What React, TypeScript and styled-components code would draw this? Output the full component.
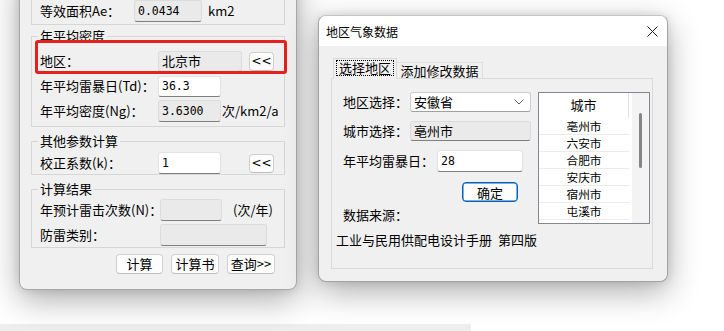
import React from "react";
import styled, { createGlobalStyle } from "styled-components";

const GlobalStyle = createGlobalStyle`
  html, body { margin: 0; padding: 0; background: #ffffff; }
  body {
    width: 724px; height: 331px; overflow: hidden;
    font-family: "Noto Sans CJK SC", "Noto Sans", sans-serif;
    font-size: 13px; color: #000;
  }
  * { box-sizing: border-box; }
`;

const Desktop = styled.div`
  position: relative;
  width: 724px;
  height: 331px;
  overflow: hidden;
  background: #ffffff;
`;

const BackStrip = styled.div`
  position: absolute;
  left: 0;
  top: 324px;
  width: 471px;
  height: 7px;
  background: #eeeeee;
`;

/* ---------- main (left) window ---------- */

const MainWindow = styled.div`
  position: absolute;
  left: 19px;
  top: -30px;
  width: 278px;
  height: 320px;
  background: #f0f0f0;
  border: 1px solid #a8a8a8;
  border-radius: 0 0 8px 8px;
  box-shadow: 0 10px 32px rgba(0, 0, 0, 0.32), 0 0 10px rgba(0, 0, 0, 0.12);
  padding: 10px 11px 0 11px;
  display: flex;
  flex-direction: column;
`;

const Highlight = styled.div`
  position: absolute;
  left: 15px;
  top: 69px;
  width: 252px;
  height: 34px;
  border: 3px solid #e4211d;
  border-radius: 3px;
  pointer-events: none;
`;

const Group = styled.fieldset<{ $mt: number; $pt: number; $pb: number }>`
  margin: ${(p) => p.$mt}px 0 0 0;
  padding: ${(p) => p.$pt}px 8px ${(p) => p.$pb}px 8px;
  border: 1px solid #d6d6d6;
  min-width: 0;
`;

const Legend = styled.legend`
  padding: 0 2px;
  margin-left: -2px;
  line-height: 16px;
  font-size: 13px;
`;

const Rows = styled.div`
  display: flex;
  flex-direction: column;
  gap: 3px;
`;

const Row = styled.div`
  display: flex;
  align-items: center;
  height: 22px;
  white-space: nowrap;
`;

const Label = styled.span<{ $w: number }>`
  flex: 0 0 ${(p) => p.$w}px;
  width: ${(p) => p.$w}px;
  line-height: 16px;
  white-space: nowrap;
`;

const Field = styled.div<{ $w: number; $h?: number; $ro?: boolean; $mono?: boolean }>`
  flex: 0 0 ${(p) => p.$w}px;
  width: ${(p) => p.$w}px;
  height: ${(p) => p.$h ?? 21}px;
  background: ${(p) => (p.$ro ? "#eaeaea" : "#ffffff")};
  border: 1px solid ${(p) => (p.$ro ? "#dcdcdc" : "#e2e2e2")};
  border-bottom-color: #7f7f7f;
  border-radius: 3px;
  padding: 0 3px;
  display: flex;
  align-items: center;
  font-family: ${(p) =>
    p.$mono
      ? `"DejaVu Sans Mono", "Noto Sans CJK SC", monospace`
      : `"Noto Sans CJK SC", sans-serif`};
  font-size: ${(p) => (p.$mono ? "11.5px" : "13px")};
  line-height: 16px;
`;

const Unit = styled.span<{ $ml: number }>`
  margin-left: ${(p) => p.$ml}px;
  line-height: 16px;
`;

const SmallButton = styled.button<{ $ml: number }>`
  margin-left: ${(p) => p.$ml}px;
  width: 25px;
  height: 19px;
  padding: 0;
  background: #fdfdfd;
  border: 1px solid #cfcfcf;
  border-bottom-color: #bdbdbd;
  border-radius: 4px;
  font-family: "DejaVu Sans", sans-serif;
  font-size: 12px;
  line-height: 17px;
  color: #000;
`;

const ButtonBar = styled.div`
  display: flex;
  justify-content: flex-end;
  gap: 8px;
  margin: 6px 10px 0 0;
`;

const PushButton = styled.button<{ $w: number }>`
  width: ${(p) => p.$w}px;
  height: 20px;
  padding: 0;
  background: #fdfdfd;
  border: 1px solid #d0d0d0;
  border-bottom-color: #bcbcbc;
  border-radius: 4px;
  font-family: "Noto Sans CJK SC", sans-serif;
  font-size: 13px;
  line-height: 18px;
  color: #000;
`;

/* ---------- dialog ---------- */

const Dialog = styled.div`
  position: absolute;
  left: 318px;
  top: 15px;
  width: 350px;
  height: 267px;
  border: 1px solid #a3a3a3;
  border-top-color: #c4c4c4;
  border-radius: 8px;
  overflow: hidden;
  background: #f0f0f0;
  box-shadow: 0 10px 32px rgba(0, 0, 0, 0.32), 0 0 10px rgba(0, 0, 0, 0.12);
  display: flex;
  flex-direction: column;
`;

const TitleBar = styled.div`
  height: 30px;
  flex: 0 0 30px;
  background: #ffffff;
  display: flex;
  align-items: center;
  justify-content: space-between;
  padding: 0 9px 0 7px;
`;

const TitleText = styled.span`
  font-size: 12px;
  line-height: 16px;
  margin-top: 1px;
`;

const DialogBody = styled.div`
  flex: 1;
  display: flex;
  flex-direction: column;
  padding: 12px 14px 12px 12px;
`;

const TabStrip = styled.div`
  display: flex;
  align-items: flex-end;
  height: 20px;
  padding-left: 2px;
`;

const ActiveTab = styled.div`
  position: relative;
  z-index: 1;
  width: 64px;
  height: 21px;
  margin-bottom: -1px;
  background: #f0f0f0;
  border: 1px solid #d9d9d9;
  border-bottom: none;
  padding: 1px 2px 0 2px;
`;

const FocusText = styled.div`
  height: 16px;
  border: 1px dotted #000;
  display: flex;
  align-items: center;
  justify-content: center;
  line-height: 14px;
`;

const Tab = styled.div`
  width: 86px;
  height: 16px;
  border: 1px solid #e0e0e0;
  border-left: none;
  border-bottom: none;
  display: flex;
  align-items: center;
  justify-content: center;
  line-height: 14px;
`;

const Panel = styled.div`
  height: 191px;
  border: 1px solid #dadada;
  display: flex;
  flex-direction: column;
  padding: 13px 2px 0 4px;
`;

const TopSection = styled.div`
  display: flex;
  align-items: flex-start;
  height: 132px;
`;

const FormCol = styled.div`
  margin-left: 7px;
  width: 188px;
  display: flex;
  flex-direction: column;
`;

const DlgRow = styled.div<{ $h: number; $mt?: number }>`
  display: flex;
  align-items: center;
  height: ${(p) => p.$h}px;
  margin-top: ${(p) => p.$mt ?? 0}px;
  white-space: nowrap;
`;

const SelectBox = styled.div`
  width: 121px;
  height: 20px;
  background: #fff;
  border: 1px solid #cccccc;
  border-bottom-color: #a0a0a0;
  border-radius: 3px;
  display: flex;
  align-items: center;
  justify-content: space-between;
  padding: 0 6px 0 3px;
  line-height: 16px;
`;

const OkButton = styled.button`
  margin-left: 119px;
  width: 56px;
  height: 20px;
  padding: 0;
  background: #fdfdfd;
  border: 1px solid #0063b8;
  box-shadow: inset 0 0 0 0.5px #0063b8;
  border-radius: 4px;
  font-family: "Noto Sans CJK SC", sans-serif;
  font-size: 13px;
  line-height: 17px;
  color: #000;
`;

const PlainText = styled.div<{ $mt?: number; $ml?: number }>`
  margin-top: ${(p) => p.$mt ?? 0}px;
  margin-left: ${(p) => p.$ml ?? 0}px;
  line-height: 16px;
  white-space: nowrap;
  word-spacing: 3px;
`;

const ListBox = styled.div`
  margin-left: 7px;
  width: 112px;
  height: 132px;
  border: 1px solid #828790;
  background: #fff;
  display: flex;
  overflow: hidden;
`;

const ListCol = styled.div`
  width: 90px;
  flex: 0 0 90px;
  display: flex;
  flex-direction: column;
`;

const ListHeader = styled.div`
  height: 25px;
  flex: 0 0 25px;
  border-right: 1px solid #e3e3e3;
  text-align: center;
  line-height: 23px;
`;

const ListRow = styled.div`
  height: 17px;
  flex: 0 0 17px;
  border-bottom: 1px solid #ebebeb;
  text-align: center;
  font-size: 11.7px;
  line-height: 16px;
`;

const ScrollTrack = styled.div`
  margin-left: 3px;
  width: 17px;
  flex: 0 0 17px;
  background: #f3f3f3;
`;

const ScrollThumb = styled.div`
  margin: 20px 0 0 7px;
  width: 3px;
  height: 55px;
  border-radius: 2px;
  background: #858585;
`;

const cities = ["亳州市", "六安市", "合肥市", "安庆市", "宿州市", "屯溪市", "淮北市"];

export default function App() {
  return (
    <>
      <GlobalStyle />
      <Desktop>
        <BackStrip />

        <MainWindow>
          <Group $mt={0} $pt={18} $pb={2}>
            <Row>
              <Label $w={94}>等效面积Ae：</Label>
              <Field $w={68} $h={22} $ro $mono>0.0434</Field>
              <Unit $ml={6}>km2</Unit>
            </Row>
          </Group>

          <Group $mt={3} $pt={6} $pb={4}>
            <Legend>年平均密度</Legend>
            <Rows>
              <Row>
                <Label $w={118}>地区：</Label>
                <Field $w={84} $ro>北京市</Field>
                <SmallButton $ml={7}>&lt;&lt;</SmallButton>
              </Row>
              <Row>
                <Label $w={118}>年平均雷暴日(Td)：</Label>
                <Field $w={63} $mono>36.3</Field>
              </Row>
              <Row>
                <Label $w={118}>年平均密度(Ng)：</Label>
                <Field $w={63} $h={22} $ro $mono>3.6300</Field>
                <Unit $ml={1}>次/km2/a</Unit>
              </Row>
            </Rows>
          </Group>

          <Group $mt={6} $pt={3} $pb={0}>
            <Legend>其他参数计算</Legend>
            <Row>
              <Label $w={118}>校正系数(k)：</Label>
              <Field $w={63} $h={22} $mono>1</Field>
              <SmallButton $ml={28}>&lt;&lt;</SmallButton>
            </Row>
          </Group>

          <Group $mt={6} $pt={2} $pb={1}>
            <Legend>计算结果</Legend>
            <Rows>
              <Row>
                <Label $w={120}>年预计雷击次数(N)：</Label>
                <Field $w={62} $h={22} $ro />
                <Unit $ml={11}>(次/年)</Unit>
              </Row>
              <Row>
                <Label $w={120}>防雷类别：</Label>
                <Field $w={107} $h={22} $ro />
              </Row>
            </Rows>
          </Group>

          <ButtonBar>
            <PushButton $w={47}>计算</PushButton>
            <PushButton $w={48}>计算书</PushButton>
            <PushButton $w={48}>查询&gt;&gt;</PushButton>
          </ButtonBar>

          <Highlight />
        </MainWindow>

        <Dialog>
          <TitleBar>
            <TitleText>地区气象数据</TitleText>
            <svg width="11" height="11" viewBox="0 0 11 11">
              <path d="M0.5 0.5 L10.5 10.5 M10.5 0.5 L0.5 10.5" stroke="#1a1a1a" strokeWidth="1" fill="none" />
            </svg>
          </TitleBar>
          <DialogBody>
            <TabStrip>
              <ActiveTab>
                <FocusText>选择地区</FocusText>
              </ActiveTab>
              <Tab>添加修改数据</Tab>
            </TabStrip>
            <Panel>
              <TopSection>
                <FormCol>
                  <DlgRow $h={20}>
                    <Label $w={67}>地区选择：</Label>
                    <SelectBox>
                      <span>安徽省</span>
                      <svg width="10" height="6" viewBox="0 0 10 6">
                        <path d="M0.5 0.5 L5 5 L9.5 0.5" stroke="#606060" strokeWidth="1" fill="none" />
                      </svg>
                    </SelectBox>
                  </DlgRow>
                  <DlgRow $h={20} $mt={9}>
                    <Label $w={67}>城市选择：</Label>
                    <Field $w={121} $h={20} $ro>亳州市</Field>
                  </DlgRow>
                  <DlgRow $h={22} $mt={9}>
                    <Label $w={94}>年平均雷暴日：</Label>
                    <Field $w={86} $h={22} $mono>28</Field>
                  </DlgRow>
                  <DlgRow $h={20} $mt={10}>
                    <OkButton>确定</OkButton>
                  </DlgRow>
                  <PlainText $mt={5}>数据来源：</PlainText>
                </FormCol>
                <ListBox>
                  <ListCol>
                    <ListHeader>城市</ListHeader>
                    {cities.map((c) => (
                      <ListRow key={c}>{c}</ListRow>
                    ))}
                  </ListCol>
                  <ScrollTrack>
                    <ScrollThumb />
                  </ScrollTrack>
                </ListBox>
              </TopSection>
              <PlainText $mt={8}>工业与民用供配电设计手册 第四版</PlainText>
            </Panel>
          </DialogBody>
        </Dialog>
      </Desktop>
    </>
  );
}
